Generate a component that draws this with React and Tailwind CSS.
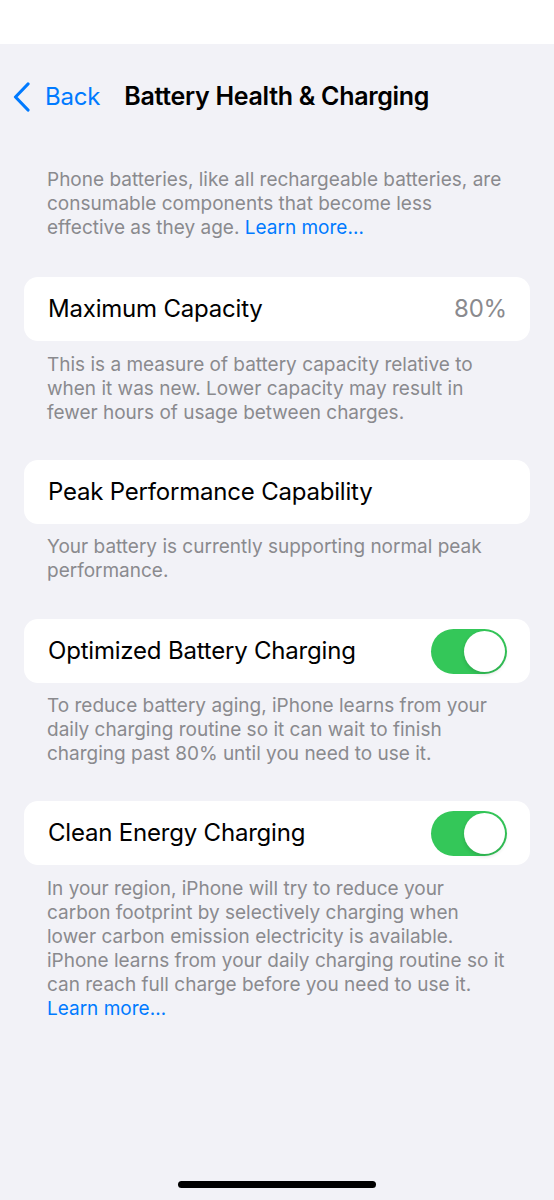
import React from "react";

const Toggle = () => (
  <div className="w-[76px] h-[45px] rounded-full bg-[#34c759] p-[2px] flex justify-end">
    <div className="w-[41px] h-[41px] rounded-full bg-white shadow-[0_2px_4px_rgba(0,0,0,0.15)]"></div>
  </div>
);

const Card = ({ children }) => (
  <div className="mx-[24px] h-[64px] rounded-[14px] bg-white pl-[24px] pr-[23px] flex items-center justify-between">
    {children}
  </div>
);

const Footer = ({ children, className = "" }) => (
  <p className={`px-[47px] text-[19px] leading-[24px] text-[#8a8a8e] ${className}`}>
    {children}
  </p>
);

export default function App() {
  return (
    <div
      className="w-[554px] h-[1200px] bg-[#f2f2f7] flex flex-col relative overflow-hidden"
      style={{ fontFamily: "Inter, 'Noto Sans', sans-serif" }}
    >
      {/* status bar area */}
      <div className="h-[44px] bg-white shrink-0"></div>

      {/* nav */}
      <div className="h-[106px] flex items-center shrink-0">
        <div className="flex items-center pl-[12px] text-[#007aff]">
          <svg width="20" height="30" viewBox="0 0 20 30" fill="none">
            <path d="M16 2 L3.5 15 L16 28" stroke="#007aff" strokeWidth="3.2" strokeLinecap="round" strokeLinejoin="round" />
          </svg>
          <span className="ml-[13px] text-[24px] tracking-[-0.2px]">Back</span>
        </div>
        <h1 className="ml-[24px] text-[25px] font-semibold text-black tracking-[-0.3px]">
          Battery Health &amp; Charging
        </h1>
      </div>

      <Footer className="mt-[18px]">
        Phone batteries, like all rechargeable batteries, are consumable components that become less effective as they age.{" "}
        <span className="text-[#007aff]">Learn more…</span>
      </Footer>

      <div className="mt-[37px]">
        <Card>
          <span className="text-[24px] text-black tracking-[-0.2px]">Maximum Capacity</span>
          <span className="text-[24px] text-[#8a8a8e] tracking-[-0.2px]">80%</span>
        </Card>
      </div>
      <Footer className="mt-[12px]">
        This is a measure of battery capacity relative to when it was new. Lower capacity may result in fewer hours of usage between charges.
      </Footer>

      <div className="mt-[35px]">
        <Card>
          <span className="text-[24px] text-black tracking-[-0.2px]">Peak Performance Capability</span>
        </Card>
      </div>
      <Footer className="mt-[11px]">
        Your battery is currently supporting normal peak performance.
      </Footer>

      <div className="mt-[36px]">
        <Card>
          <span className="text-[24px] text-black tracking-[-0.2px]">Optimized Battery Charging</span>
          <Toggle />
        </Card>
      </div>
      <Footer className="mt-[11px]">
        To reduce battery aging, iPhone learns from your daily charging routine so it can wait to finish charging past 80% until you need to use it.
      </Footer>

      <div className="mt-[35px]">
        <Card>
          <span className="text-[24px] text-black tracking-[-0.2px]">Clean Energy Charging</span>
          <Toggle />
        </Card>
      </div>
      <Footer className="mt-[12px]">
        In your region, iPhone will try to reduce your carbon footprint by selectively charging when lower carbon emission electricity is available. iPhone learns from your daily charging routine so it can reach full charge before you need to use it.
        <br />
        <span className="text-[#007aff]">Learn more…</span>
      </Footer>

      {/* home indicator */}
      <div className="absolute bottom-[12px] left-[178px] w-[198px] h-[7px] rounded-full bg-black"></div>
    </div>
  );
}
